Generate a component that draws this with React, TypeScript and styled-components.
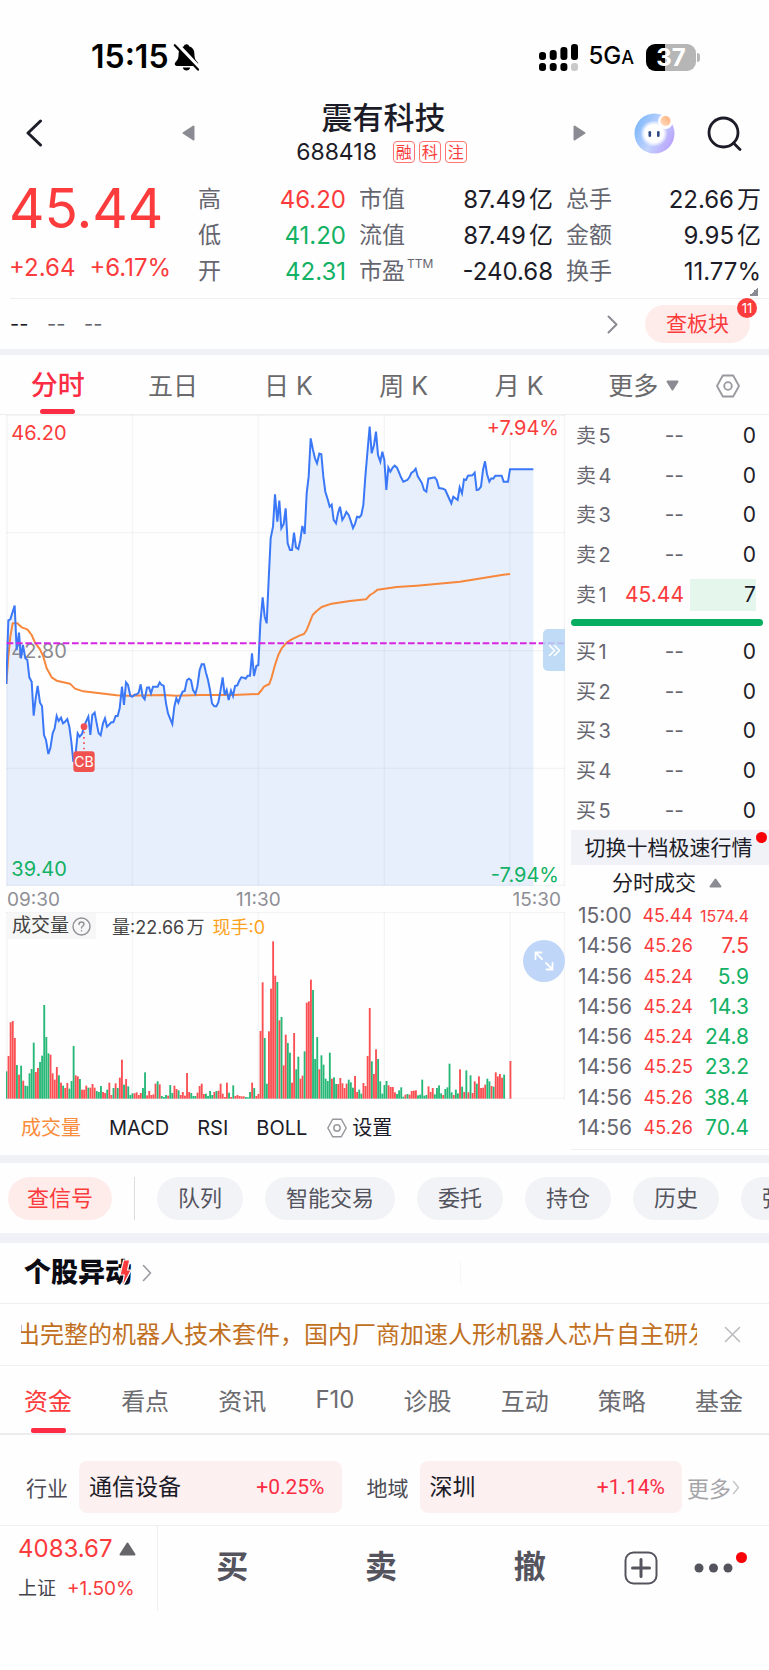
import React from "react";
import styled, { createGlobalStyle } from "styled-components";

const RED = "#fb3b3c";
const GREEN = "#12b164";
const INK = "#1c1c28";
const GRAY = "#666670";
const BAND = "#f0f1f6";
const LINE = "#efeff1";

const toneColor = { red: RED, green: GREEN, ink: INK, gray: GRAY } as const;
type Tone = keyof typeof toneColor;

const GlobalStyle = createGlobalStyle`
  *, *::before, *::after { box-sizing: border-box; }
  body {
    margin: 0;
    background: #fefefe;
    color: ${INK};
    font-family: Inter, "Noto Sans CJK SC", sans-serif;
    text-autospace: normal;
    overflow-x: hidden;
  }
  button { font: inherit; color: inherit; border: 0; background: none; padding: 0; cursor: pointer; }
  a { color: inherit; text-decoration: none; }
  h1, h2, p, dl, dd, dt { margin: 0; font-weight: 400; }
  svg { display: block; flex: none; }
`;

const Page = styled.div`
  width: 100%;
  min-height: 100vh;
  overflow: hidden;
`;

/* ---------- status bar ---------- */

const StatusBar = styled.div`
  display: flex;
  align-items: center;
  justify-content: space-between;
  height: 92px;
  padding: 22px 73px 0 91px;
  color: #000;
`;
const StatusGroup = styled.div<{ $gap: number }>`
  display: flex;
  align-items: center;
  gap: ${(p) => p.$gap}px;
`;
const Clock = styled.span`
  font-size: 32px;
  font-weight: 600;
  line-height: 36px;
`;
const Network = styled.span`
  font-size: 24px;
  font-weight: 500;
  line-height: 30px;
  padding-right: 2px;
  small { font-size: 18px; }
`;
const Battery = styled.span`
  position: relative;
  display: block;
  width: 50px;
  height: 27px;
  border-radius: 9px;
  background: linear-gradient(90deg, #000 37%, #b6b6b6 37%);
  color: #fff;
  font-size: 24px;
  font-weight: 700;
  line-height: 27px;
  text-align: center;
  &::after {
    content: "";
    position: absolute;
    right: -4px;
    top: 9px;
    width: 3px;
    height: 9px;
    border-radius: 0 3px 3px 0;
    background: #b6b6b6;
  }
`;

/* ---------- title bar ---------- */

const TitleBar = styled.header`
  display: grid;
  grid-template-columns: 1fr auto 1fr;
  align-items: center;
  height: 82px;
  padding: 0 27px 0 25px;
`;
const TitleSide = styled.div<{ $right?: boolean }>`
  display: flex;
  align-items: center;
  justify-content: space-between;
  padding: ${(p) => (p.$right ? "0 0 0 102px" : "0 102px 0 0")};
`;
const TitleActions = styled.div`
  display: flex;
  align-items: center;
  gap: 32px;
`;
const TitleBlock = styled.div`
  width: 174px;
  display: flex;
  flex-direction: column;
  align-items: center;
`;
const StockName = styled.h1`
  font-size: 31px;
  font-weight: 500;
  line-height: 38px;
`;
const CodeRow = styled.div`
  display: flex;
  align-items: center;
  gap: 4px;
  height: 30px;
  padding-right: 4px;
`;
const Code = styled.span`
  font-size: 23px;
  line-height: 30px;
  margin-right: 12px;
`;
const Tag = styled.span`
  width: 22px;
  height: 22px;
  border: 1px solid #ff7474;
  border-radius: 4px;
  color: ${RED};
  font-size: 16px;
  line-height: 20px;
  text-align: center;
`;

/* ---------- quote summary ---------- */

const Quote = styled.section`
  position: relative;
  display: grid;
  grid-template-columns: 189px minmax(0, 1fr);
  padding: 7px 8px 9px 9px;
`;
const PriceBlock = styled.div`
  display: flex;
  flex-direction: column;
  justify-content: space-between;
  color: ${RED};
`;
const Price = styled.p`
  font-size: 55px;
  line-height: 54px;
`;
const Changes = styled.p`
  display: flex;
  gap: 14px;
  font-size: 24px;
  line-height: 42px;
`;
const Metrics = styled.div`
  display: grid;
  grid-template-columns: 148fr 194fr 195fr;
  column-gap: 13px;
`;
const MetricGroup = styled.dl`
  display: flex;
  flex-direction: column;
`;
const Metric = styled.div<{ $tone: Tone }>`
  display: flex;
  justify-content: space-between;
  height: 36px;
  font-size: 24px;
  line-height: 37px;
  white-space: nowrap;
  dt { display: flex; color: ${GRAY}; font-size: 23px; }
  dd { color: ${(p) => toneColor[p.$tone]}; }
  sup { font-size: 12px; line-height: 22px; margin-left: 2px; }
`;
const Corner = styled.span`
  position: absolute;
  right: 11px;
  bottom: 2px;
  width: 9px;
  height: 9px;
  background: linear-gradient(135deg, transparent 50%, #8b8b93 50%);
`;
const SectorRow = styled.div`
  display: flex;
  align-items: center;
  height: 51px;
  margin-left: 10px;
  padding-right: 19px;
  border-top: 1px solid ${LINE};
  color: ${GRAY};
  font-size: 20px;
`;
const Dashes = styled.span`
  width: 37px;
  line-height: 24px;
  &:first-child { color: ${INK}; }
`;
const SectorLink = styled.button`
  margin-left: auto;
  margin-right: 27px;
`;
const SectorButton = styled.button`
  position: relative;
  width: 105px;
  height: 38px;
  border-radius: 19px;
  background: #feeceb;
  color: ${RED};
  font-size: 21px;
  line-height: 38px;
`;
const CountBadge = styled.span`
  position: absolute;
  right: -7px;
  top: -7px;
  width: 20px;
  height: 20px;
  border-radius: 50%;
  background: ${RED};
  color: #fff;
  font-size: 13px;
  line-height: 20px;
  text-align: center;
`;
const Band = styled.div<{ $size: number }>`
  height: ${(p) => p.$size}px;
  background: ${BAND};
`;

/* ---------- period tabs ---------- */

const PeriodTabs = styled.nav`
  display: grid;
  grid-template-columns: repeat(5, 15%) 1fr 82px;
  height: 60px;
  border-bottom: 1px solid ${LINE};
`;
const PeriodTab = styled.button<{ $active?: boolean; $menu?: boolean }>`
  position: relative;
  display: flex;
  align-items: center;
  justify-content: center;
  gap: 8px;
  padding: 2px 0 0 ${(p) => (p.$menu ? 24 : 0)}px;
  color: ${(p) => (p.$active ? "#fb2c43" : "#6a6a6c")};
  font-size: ${(p) => (p.$active ? 27 : 25)}px;
  font-weight: ${(p) => (p.$active ? 500 : 400)};
  line-height: 36px;
  &::after {
    content: "";
    display: ${(p) => (p.$active ? "block" : "none")};
    position: absolute;
    bottom: 0;
    width: 35px;
    height: 5px;
    border-radius: 3px;
    background: #fb2c43;
  }
`;

/* ---------- market area ---------- */

const Market = styled.section`
  display: grid;
  grid-template-columns: minmax(0, 1fr) 204px;
`;
const ChartColumn = styled.div`
  display: flex;
  flex-direction: column;
`;
const ChartFrame = styled.div`
  position: relative;
  padding-left: 6px;
  svg.plot { width: 100%; height: auto; }
`;
const OpenSide = styled.button`
  position: absolute;
  right: 0;
  top: 214px;
  display: flex;
  align-items: center;
  justify-content: center;
  width: 22px;
  height: 42px;
  border-radius: 5px 0 0 5px;
  background: #b5d6f4dd;
`;
const TimeAxis = styled.div`
  display: grid;
  grid-template-columns: 228fr auto 279fr;
  padding: 0 4px 0 7px;
  color: #8f8f96;
  font-size: 19px;
  line-height: 27px;
  height: 26px;
  span:last-child { text-align: right; }
`;
const VolumeLegend = styled.div`
  position: absolute;
  left: 7px;
  top: 1px;
  display: flex;
  align-items: flex-start;
  color: #444;
  font-size: 18px;
  line-height: 30px;
`;
const VolumeName = styled.button`
  display: flex;
  align-items: center;
  gap: 3px;
  height: 26px;
  padding: 0 5px;
  margin-right: 16px;
  background: #f7f7f7;
  font-size: 19px;
  line-height: 26px;
`;
const VolumeNow = styled.span`
  margin-left: 8px;
  color: #fca21c;
`;
const Expand = styled.button`
  position: absolute;
  right: 0;
  top: 28px;
  display: flex;
  align-items: center;
  justify-content: center;
  width: 42px;
  height: 42px;
  border-radius: 50%;
  background: #bfd6f8;
`;
const Indicators = styled.nav`
  display: flex;
  align-items: center;
  gap: 28px;
  height: 56px;
  padding: 2px 0 0 21px;
  font-size: 20px;
`;
const Indicator = styled.button<{ $active?: boolean }>`
  display: flex;
  align-items: center;
  gap: 5px;
  line-height: 28px;
  white-space: nowrap;
  color: ${(p) => (p.$active ? "#fb8c3c" : INK)};
  &:last-child { margin-left: -8px; }
`;

/* ---------- order book ---------- */

const Side = styled.aside`
  display: flex;
  flex-direction: column;
  padding: 1px 0 5px 6px;
`;
const Book = styled.table`
  width: 184px;
  height: 198px;
  margin-left: 5px;
  border-collapse: collapse;
  table-layout: fixed;
  font-size: 21px;
  line-height: 32px;
  td, th { padding: 1px 0 0; font-weight: 400; white-space: nowrap; }
`;
const Level = styled.th`
  width: 42px;
  text-align: left;
  color: ${GRAY};
  font-size: 20px;
`;
const LevelPrice = styled.td<{ $tone: Tone }>`
  width: 66px;
  text-align: right;
  color: ${(p) => toneColor[p.$tone]};
`;
const LevelSize = styled.td`
  text-align: right;
`;
const SizeBar = styled.span<{ $filled: boolean }>`
  display: block;
  margin-left: 6px;
  margin-right: 4px;
  background: ${(p) => (p.$filled ? "#e5f6ed" : "transparent")};
`;
const Ratio = styled.div`
  height: 7px;
  margin: 5px 6px 6px 0;
  border-radius: 4px;
  background: #07ae60;
`;
const DepthSwitch = styled.button`
  position: relative;
  height: 35px;
  padding-right: 3px;
  background: #f1f2f7;
  font-size: 21px;
  line-height: 35px;
`;
const Dot = styled.span<{ $right: number; $top: number }>`
  position: absolute;
  right: ${(p) => p.$right}px;
  top: ${(p) => p.$top}px;
  width: 11px;
  height: 11px;
  border-radius: 50%;
  background: #fb0007;
`;
const TradesTitle = styled.button`
  display: flex;
  align-items: center;
  justify-content: center;
  gap: 13px;
  height: 36px;
  padding: 0 44px 0 38px;
  font-size: 21px;
  line-height: 36px;
`;
const Trades = styled.table`
  width: 171px;
  height: 242px;
  margin: 0 0 6px 7px;
  border-collapse: collapse;
  table-layout: fixed;
  td { padding: 0; white-space: nowrap; text-align: right; line-height: 28px; }
`;
const TradeTime = styled.td`
  width: 56px;
  color: ${GRAY};
  font-size: 21px;
  && { text-align: left; }
`;
const TradePrice = styled.td`
  width: 59px;
  color: ${RED};
  font-size: 18px;
`;
const TradeSize = styled.td<{ $tone: Tone; $small: boolean }>`
  color: ${(p) => toneColor[p.$tone]};
  font-size: ${(p) => (p.$small ? 16 : 21)}px;
`;
const SideRule = styled.div`
  height: 1px;
  background: ${LINE};
`;

/* ---------- shortcuts ---------- */

const Shortcuts = styled.nav`
  display: flex;
  gap: 22px;
  height: 70px;
  padding: 14px 0 13px 8px;
  overflow: hidden;
`;
const Pill = styled.button<{ $hot?: boolean }>`
  flex: none;
  height: 43px;
  padding: 0 ${(p) => (p.$hot ? 19 : 21)}px;
  border-radius: 22px;
  background: ${(p) => (p.$hot ? "#feeceb" : "#f2f3f7")};
  color: ${(p) => (p.$hot ? RED : "#54545e")};
  font-size: 22px;
  line-height: 43px;
`;
const PillRule = styled.span`
  flex: none;
  width: 1px;
  background: #dddde1;
`;

/* ---------- movement and news ---------- */

const Movement = styled.section`
  display: flex;
  align-items: center;
  height: 61px;
  padding-left: 24px;
  border-bottom: 1px solid ${LINE};
`;
const MovementTitle = styled.h2`
  position: relative;
  margin-right: 10px;
  color: #0b0b14;
  font-size: 27px;
  font-weight: 900;
  line-height: 30px;
  svg { position: absolute; right: 0; top: 1px; }
`;
const FaintRule = styled.span`
  width: 1px;
  height: 22px;
  margin-left: 308px;
  background: #f6f6f8;
`;
const News = styled.section`
  display: flex;
  align-items: center;
  justify-content: space-between;
  height: 62px;
  padding: 0 28px 0 21px;
  border-bottom: 1px solid ${LINE};
`;
const NewsClip = styled.div`
  flex: 1;
  min-width: 0;
  margin-right: 27px;
  overflow: hidden;
`;
const NewsText = styled.p`
  margin-left: -5px;
  color: #c1701f;
  font-size: 24px;
  line-height: 34px;
  white-space: nowrap;
`;
const InfoTabs = styled.nav`
  display: flex;
  justify-content: space-between;
  height: 69px;
  padding: 0 26px 0 24px;
  border-bottom: 2px solid #ededf0;
`;
const InfoTab = styled.button<{ $active?: boolean }>`
  position: relative;
  display: flex;
  justify-content: center;
  align-items: center;
  color: ${(p) => (p.$active ? RED : "#6b6b70")};
  font-size: 24px;
  &::after {
    content: "";
    display: ${(p) => (p.$active ? "block" : "none")};
    position: absolute;
    bottom: 0;
    width: 35px;
    height: 5px;
    border-radius: 2px;
    background: #fb2c43;
  }
`;
const Peers = styled.section`
  display: flex;
  align-items: center;
  height: 91px;
  padding: 26px 29px 12px 26px;
  border-bottom: 1px solid ${LINE};
`;
const PeerLabel = styled.span`
  flex: none;
  width: 53px;
  color: #4c4c56;
  font-size: 21px;
`;
const PeerCard = styled.a`
  flex: 1;
  display: flex;
  align-items: center;
  justify-content: space-between;
  height: 52px;
  padding: 0 17px 0 10px;
  border-radius: 8px;
  background: #fdf0f1;
  font-size: 23px;
  line-height: 30px;
  & + span { margin-left: 25px; }
  b {
    color: #fb2c43;
    font-family: Roboto, sans-serif;
    font-weight: 400;
    font-size: 21px;
  }
`;
const PeerMore = styled.a`
  display: flex;
  align-items: center;
  gap: 1px;
  margin-left: 5px;
  color: #a5a5a9;
  font-size: 22px;
`;

/* ---------- bottom bar ---------- */

const BottomBar = styled.footer`
  display: grid;
  grid-template-columns: 158px 149fr 149fr 149fr 73fr 73fr;
  height: 85px;
  padding-right: 19px;
`;
const IndexCell = styled.a`
  display: flex;
  flex-direction: column;
  gap: 9px;
  padding: 8px 0 0 18px;
  border-right: 1px solid ${LINE};
`;
const IndexValue = styled.span`
  display: flex;
  align-items: center;
  gap: 6px;
  color: ${RED};
  font-size: 24px;
  line-height: 30px;
`;
const IndexChange = styled.span`
  display: flex;
  gap: 11px;
  color: #44444e;
  font-size: 19px;
  line-height: 31px;
  b { color: ${RED}; font-weight: 400; }
`;
const BottomAction = styled.button`
  position: relative;
  display: flex;
  align-items: center;
  justify-content: center;
  padding-bottom: 2px;
  color: #54545f;
  font-size: 32px;
  font-weight: 700;
`;
const ActionLabel = styled.span`
  line-height: 40px;
  padding-bottom: 2px;
`;

/* ---------- data ---------- */

const metricGroups: { label: string; sup?: string; value: string; tone: Tone }[][] = [
  [
    { label: "高", value: "46.20", tone: "red" },
    { label: "低", value: "41.20", tone: "green" },
    { label: "开", value: "42.31", tone: "green" },
  ],
  [
    { label: "市值", value: "87.49亿", tone: "ink" },
    { label: "流值", value: "87.49亿", tone: "ink" },
    { label: "市盈", sup: "TTM", value: "-240.68", tone: "ink" },
  ],
  [
    { label: "总手", value: "22.66万", tone: "ink" },
    { label: "金额", value: "9.95亿", tone: "ink" },
    { label: "换手", value: "11.77%", tone: "ink" },
  ],
];

const sells = [
  ["卖5", "--", "0"],
  ["卖4", "--", "0"],
  ["卖3", "--", "0"],
  ["卖2", "--", "0"],
  ["卖1", "45.44", "7"],
];
const buys = [
  ["买1", "--", "0"],
  ["买2", "--", "0"],
  ["买3", "--", "0"],
  ["买4", "--", "0"],
  ["买5", "--", "0"],
];

const trades: [string, string, string, Tone][] = [
  ["15:00", "45.44", "1574.4", "red"],
  ["14:56", "45.26", "7.5", "red"],
  ["14:56", "45.24", "5.9", "green"],
  ["14:56", "45.24", "14.3", "green"],
  ["14:56", "45.24", "24.8", "green"],
  ["14:56", "45.25", "23.2", "green"],
  ["14:56", "45.26", "38.4", "green"],
  ["14:56", "45.26", "70.4", "green"],
];

/* Chart units are a third of a pixel at the design width. */
const pricePoints =
  "19,807 25,616 31,613 44,572 50,705 57,653 63,730 69,690 76,730 82,735 88,787 95,800 101,902 107,850 113,813 120,863 126,873 132,960 138,975 145,1017 151,1000 158,955 164,940 170,903 176,918 183,908 189,925 195,920 202,912 208,935 214,980 220,1040 227,1015 233,955 239,965 246,957 252,935 258,920 265,905 271,960 277,900 284,893 290,925 296,955 302,961 309,925 315,910 321,935 328,928 334,922 340,922 347,903 353,903 359,880 366,815 372,870 378,802 384,810 391,843 397,845 404,839 410,838 416,833 422,808 428,845 434,853 441,818 447,817 453,835 459,815 466,815 473,815 479,802 485,810 491,812 498,865 504,895 510,910 517,927 523,875 529,850 535,863 542,843 548,830 554,828 561,795 567,791 573,796 579,825 586,837 592,815 599,765 605,748 612,748 618,773 624,795 630,825 636,865 643,874 649,874 655,862 661,830 668,787 674,840 680,825 686,855 693,827 699,843 705,813 712,811 718,797 724,787 731,788 737,791 743,782 750,782 756,715 762,783 769,753 775,750 781,625 788,547 794,605 800,625 806,495 812,370 819,335 825,238 832,320 838,257 844,340 851,327 857,280 863,385 870,405 876,405 882,353 888,397 895,402 901,375 907,333 914,357 920,235 926,185 932,70 939,105 945,130 951,145 958,116 964,118 970,185 976,230 983,253 989,275 995,269 1001,315 1008,325 1014,295 1020,275 1027,315 1033,305 1039,291 1046,300 1052,317 1059,339 1065,327 1071,305 1078,307 1084,300 1090,270 1096,185 1102,115 1109,35 1115,115 1122,90 1128,50 1134,120 1141,140 1147,110 1153,135 1159,225 1165,158 1171,170 1178,158 1184,152 1191,158 1197,172 1203,187 1210,200 1222,195 1228,187 1234,174 1241,169 1247,161 1253,183 1266,205 1272,225 1279,230 1285,191 1304,187 1310,195 1317,219 1329,221 1336,225 1348,252 1354,265 1360,245 1373,255 1379,217 1386,235 1392,193 1398,195 1404,182 1417,181 1424,173 1430,225 1436,224 1443,215 1449,165 1455,139 1461,177 1468,200 1474,190 1480,191 1486,182 1505,182 1511,200 1524,200 1530,163 1600,163";

const averagePoints =
  "19,807 25,725 31,665 38,625 52,625 65,637 82,643 95,660 105,683 120,703 130,725 140,760 155,787 170,797 210,806 225,821 250,829 300,835 350,841 380,842 490,840 530,842 600,840 700,840 775,837 785,825 792,815 808,807 815,787 825,750 835,720 845,700 860,683 875,673 900,661 912,657 920,645 930,620 938,600 950,588 965,576 995,566 1050,558 1098,553 1110,540 1120,534 1133,524 1190,516 1250,512 1340,504 1380,500 1510,479 1530,477";

const volumes = (
  "g82 r128 r229 r233 r182 g101 r72 g99 r54 g39 g38 g76 g89 g168 r80 r92 g110 g129 g281 g185 g136 r132 r76 r57 r95 g70 r48 g39 r32 r47 g30 g53 g158 r70 r67 g59 r27 r27 r39 g33 r33 r44 r33 g23 g20 g38 r20 r17 g27 r48 r11 g32 r46 g32 r63 r117 g42 r59 g37 g11 " +
  "g16 r16 r19 r11 r17 g32 g79 r10 r23 r11 r13 r45 g52 r43 g8 g5 g11 r9 g41 g17 r39 r29 g25 r11 r20 r9 r77 r20 g17 g8 g8 r18 r38 r45 r14 g15 g8 g23 g11 r20 g23 r24 r45 r15 r5 r48 g18 r5 g40 r8 r11 r8 r7 r7 g5 g4 g20 r48 g32 r8 " +
  "r14 r203 r349 g182 g45 r202 r330 r472 r369 g350 r235 g245 r100 r192 g167 g138 r48 r197 g88 g126 r60 r69 g142 r288 r292 r357 g326 g119 g185 r88 g130 g102 g60 g53 g138 r60 g64 g44 r44 r62 r46 r32 r45 g57 g49 g33 r68 r20 g27 g15 r47 r38 r128 r272 g112 r74 r148 g119 g52 g15 " +
  "g41 g53 r40 r35 r35 r19 g14 g25 g34 g6 r12 g14 r12 r23 r24 r25 g10 g12 g57 g9 g11 r37 r20 r32 g13 g32 g40 g16 r11 g29 g34 g105 g19 r11 g27 g16 r88 g36 r20 g85 r19 g70 r17 r52 g45 r67 r32 r33 r42 g60 g52 r38 g36 r79 r67 r74 r63 g72 g0 g0 r113"
).split(" ");

const shortcuts = ["队列", "智能交易", "委托", "持仓", "历史", "弹幕"];
const infoTabs = ["资金", "看点", "资讯", "F10", "诊股", "互动", "策略", "基金"];
const gridX = [21, 397, 775, 1153, 1530];

/* ---------- icons ---------- */

const BellOffIcon = () => (
  <svg width="27" height="29" viewBox="0 0 27 29">
    <path d="M13.5 1.2c-1.5 0-2.4.9-2.6 2.1C7.500 4.300 5.600 7 5.600 10.800c0 5.200-1.500 6.700-3 8.300-1.500 1.700-.8 3.900 1.200 3.900h19.400c2 0 2.700-2.200 1.200-3.900-1.500-1.600-3-3.100-3-8.300 0-3.800-1.900-6.500-5.300-7.500-.2-1.200-1.100-2.100-2.600-2.100z" />
    <path d="M9.800 24.600h7.400c-.4 1.900-1.800 3-3.700 3s-3.300-1.100-3.700-3z" />
    <path d="M3.600 1 26.500 25.500" stroke="#fefefe" strokeWidth="4.400" />
    <path d="M1.800 2.200 25 26.600" stroke="#000" strokeWidth="2.200" strokeLinecap="round" />
  </svg>
);

const SignalIcon = () => (
  <svg width="39" height="27" viewBox="0 0 39 27">
    <rect x="0" y="8" width="7" height="8" rx="3" />
    <rect x="10.700" y="6" width="7" height="10" rx="3" />
    <rect x="21.400" y="3" width="7" height="13" rx="3" />
    <rect x="32" y="0" width="7" height="16" rx="3" />
    <rect x="0" y="19" width="7" height="8" rx="3" />
    <rect x="10.700" y="19" width="7" height="8" rx="3" />
    <rect x="21.400" y="19" width="7" height="8" rx="3" />
    <rect x="32" y="19" width="7" height="8" rx="3" fill="#c9c9c9" />
  </svg>
);

const Arrow = ({ w, h, d, color, width = 2 }: { w: number; h: number; d: string; color: string; width?: number }) => (
  <svg width={w} height={h} viewBox={`0 0 ${w} ${h}`} fill="none" stroke={color} strokeWidth={width} strokeLinecap="round" strokeLinejoin="round">
    <path d={d} />
  </svg>
);

const Triangle = ({ w, h, points, color }: { w: number; h: number; points: string; color: string }) => (
  <svg width={w} height={h} viewBox={`0 0 ${w} ${h}`} fill={color} stroke={color} strokeWidth="2" strokeLinejoin="round">
    <polygon points={points} />
  </svg>
);

const AssistantIcon = () => (
  <svg width="41" height="41" viewBox="0 0 41 41">
    <defs>
      <linearGradient id="halo" x1="0" y1="0.300" x2="1" y2="0.800">
        <stop offset="0" stopColor="#7db8fb" />
        <stop offset="0.500" stopColor="#c3d3fd" />
        <stop offset="1" stopColor="#b79cfb" />
      </linearGradient>
      <radialGradient id="face" cx="0.500" cy="0.500" r="0.500">
        <stop offset="0.700" stopColor="#fff" />
        <stop offset="1" stopColor="#fff" stopOpacity="0.200" />
      </radialGradient>
      <linearGradient id="orb" x1="0" y1="1" x2="1" y2="0">
        <stop offset="0" stopColor="#ffe0c4" />
        <stop offset="1" stopColor="#fdae78" />
      </linearGradient>
    </defs>
    <circle cx="20.500" cy="20.500" r="20" fill="url(#halo)" />
    <rect x="7" y="8" width="26" height="25" rx="12" fill="url(#face)" />
    <circle cx="31.500" cy="8.500" r="7.500" fill="#fefefe" />
    <circle cx="31.500" cy="8" r="5" fill="url(#orb)" />
    <rect x="14.500" y="18" width="2.600" height="6" rx="1.300" fill="#2e4a86" />
    <rect x="23" y="18" width="2.600" height="6" rx="1.300" fill="#2e4a86" />
  </svg>
);

const SearchIcon = () => (
  <svg width="35" height="35" viewBox="0 0 35 35" fill="none" stroke={INK} strokeWidth="2.800" strokeLinecap="round">
    <circle cx="16.500" cy="16.500" r="14.500" />
    <path d="m26.500 27 6.500 6.500" />
  </svg>
);

const HexIcon = ({ size }: { size: number }) => (
  <svg width={size} height={size} viewBox="0 0 24 24" fill="none" stroke="#98989f" strokeWidth="1.800" strokeLinejoin="round">
    <path d="M6.800 1.500h10.400L23 12l-5.800 10.500H6.800L1 12z" />
    <circle cx="12" cy="12" r="3.800" />
  </svg>
);

const HelpIcon = () => (
  <svg width="19" height="19" viewBox="0 0 19 19" fill="none" stroke="#909096" strokeWidth="1.400" strokeLinecap="round">
    <circle cx="9.500" cy="9.500" r="8.500" />
    <path d="M7 7.500c0-1.500 1.100-2.500 2.500-2.500S12 6 12 7.300c0 1.700-2.500 1.700-2.500 3.700M9.500 13.600v.3" />
  </svg>
);

const ExpandIcon = () => (
  <svg width="20" height="20" viewBox="0 0 20 20" fill="none" stroke="#fff" strokeWidth="1.800" strokeLinecap="round">
    <path d="M1.500 8V1.500h6M1.800 1.800 8 8M18.500 12v6.500h-6M18.200 18.200 12 12" />
  </svg>
);

const PlusBoxIcon = () => (
  <svg width="34" height="34" viewBox="0 0 34 34" fill="none" stroke="#54545f">
    <rect x="1.500" y="1.500" width="31" height="31" rx="8" strokeWidth="2" />
    <path d="M8.500 17h17M17 8.500v17" strokeWidth="3" strokeLinecap="round" />
  </svg>
);

const MoreDotsIcon = () => (
  <svg width="39" height="10" viewBox="0 0 39 10" fill="#54545f">
    <circle cx="5" cy="5" r="4.500" />
    <circle cx="19.500" cy="5" r="4.500" />
    <circle cx="34" cy="5" r="4.500" />
  </svg>
);

const BoltIcon = () => (
  <svg width="14" height="30" viewBox="0 0 14 30" fill={RED} stroke="#fefefe" strokeWidth="1.200">
    <path d="M5.500 1h6.300L9.600 11h3.600L4 29l2.200-13H2z" />
  </svg>
);

/* ---------- charts ---------- */

const PriceChart = () => (
  <svg className="plot" viewBox="18 0 1677 1413" fontFamily="Inter" fontSize="60">
    <polygon points={`${pricePoints} 1600,1412 19,1412`} fill="#e7effc" />
    <g stroke="#9aa0b4" strokeOpacity="0.140" strokeWidth="3">
      {gridX.map((x) => (
        <path key={x} d={`M${x} 0V1412`} />
      ))}
      <path d="M1693 0V1412M18 1H1695M18 353H1695M18 707H1695M18 1060H1695M18 1411H1695" />
    </g>
    <text x="34" y="729" fill="#8b8b8f">42.80</text>
    <polyline points={averagePoints} fill="none" stroke="#f6873b" strokeWidth="6" strokeLinejoin="round" />
    <polyline points={pricePoints} fill="none" stroke="#3a78f7" strokeWidth="6" strokeLinejoin="miter" />
    <path d="M20 685H1695" stroke="#d526e2" strokeWidth="6" strokeDasharray="20 8" />
    <text x="34" y="74" fill={RED}>46.20</text>
    <text x="1677" y="59" fill={RED} textAnchor="end">+7.94%</text>
    <text x="34" y="1384" fill={GREEN}>39.40</text>
    <text x="1677" y="1400" fill={GREEN} textAnchor="end">-7.94%</text>
    <circle cx="252" cy="935" r="10" fill="#ef4f55" />
    <path d="M252 950V1004" stroke="#ef4f55" strokeWidth="5" strokeDasharray="5 11" />
    <rect x="220" y="1009" width="64" height="62" rx="9" fill="#ef524f" />
    <text x="252" y="1055" fill="#fff" fontSize="42" textAnchor="middle">CB</text>
  </svg>
);

const VolumeChart = () => (
  <svg className="plot" viewBox="18 0 1677 561">
    <g stroke="#9aa0b4" strokeOpacity="0.140" strokeWidth="3">
      {gridX.map((x) => (
        <path key={x} d={`M${x} 0V560`} />
      ))}
      <path d="M1693 0V560M18 1H1695M18 559H1695" />
    </g>
    {volumes.map((v, i) => {
      const h = Number(v.slice(1));
      return (
        <rect key={i} x={16.5 + i * 6.3} y={560 - h} width="5.600" height={h} fill={v[0] === "r" ? "#fa5053" : "#27b878"} />
      );
    })}
  </svg>
);

const OrderTable = ({ rows, label }: { rows: string[][]; label: string }) => (
  <Book aria-label={label}>
    <tbody>
      {rows.map(([name, price, size]) => (
        <tr key={name}>
          <Level scope="row">{name}</Level>
          <LevelPrice $tone={price === "--" ? "gray" : "red"}>{price}</LevelPrice>
          <LevelSize>
            <SizeBar $filled={size !== "0"}>{size}</SizeBar>
          </LevelSize>
        </tr>
      ))}
    </tbody>
  </Book>
);

export default function App() {
  return (
    <Page>
      <GlobalStyle />
      <StatusBar>
        <StatusGroup $gap={4}>
          <Clock>15:15</Clock>
          <BellOffIcon />
        </StatusGroup>
        <StatusGroup $gap={10}>
          <SignalIcon />
          <Network>
            5G<small>A</small>
          </Network>
          <Battery>37</Battery>
        </StatusGroup>
      </StatusBar>

      <TitleBar>
        <TitleSide>
          <button aria-label="返回">
            <Arrow w={18} h={28} d="M15.500 2 3 14l12.500 12" color={INK} width={3} />
          </button>
          <button aria-label="上一只">
            <Triangle w={13} h={16} points="11.500,1.500 11.500,14.500 1.500,8" color="#8b8b93" />
          </button>
        </TitleSide>
        <TitleBlock>
          <StockName>震有科技</StockName>
          <CodeRow>
            <Code>688418</Code>
            <Tag>融</Tag>
            <Tag>科</Tag>
            <Tag>注</Tag>
          </CodeRow>
        </TitleBlock>
        <TitleSide $right>
          <button aria-label="下一只">
            <Triangle w={13} h={16} points="1.500,1.500 1.500,14.500 11.500,8" color="#8b8b93" />
          </button>
          <TitleActions>
            <button aria-label="智能助手">
              <AssistantIcon />
            </button>
            <button aria-label="搜索">
              <SearchIcon />
            </button>
          </TitleActions>
        </TitleSide>
      </TitleBar>

      <Quote>
        <PriceBlock>
          <Price>45.44</Price>
          <Changes>
            <span>+2.64</span>
            <span>+6.17%</span>
          </Changes>
        </PriceBlock>
        <Metrics>
          {metricGroups.map((group, i) => (
            <MetricGroup key={i}>
              {group.map((m) => (
                <Metric key={m.label} $tone={m.tone}>
                  <dt>
                    {m.label}
                    {m.sup && <sup>{m.sup}</sup>}
                  </dt>
                  <dd>{m.value}</dd>
                </Metric>
              ))}
            </MetricGroup>
          ))}
        </Metrics>
        <Corner />
      </Quote>

      <SectorRow>
        <Dashes>--</Dashes>
        <Dashes>--</Dashes>
        <Dashes>--</Dashes>
        <SectorLink aria-label="所属板块">
          <Arrow w={11} h={19} d="m1.500 1.500 8 8-8 8" color="#8b8b93" width={2} />
        </SectorLink>
        <SectorButton>
          查板块<CountBadge>11</CountBadge>
        </SectorButton>
      </SectorRow>
      <Band $size={6} />

      <PeriodTabs>
        <PeriodTab $active>分时</PeriodTab>
        <PeriodTab>五日</PeriodTab>
        <PeriodTab>日 K</PeriodTab>
        <PeriodTab>周 K</PeriodTab>
        <PeriodTab>月 K</PeriodTab>
        <PeriodTab $menu>
          更多
          <Triangle w={13} h={11} points="1.500,1.500 11.500,1.500 6.500,9.500" color="#8b8b93" />
        </PeriodTab>
        <PeriodTab aria-label="图表设置">
          <HexIcon size={24} />
        </PeriodTab>
      </PeriodTabs>

      <Market>
        <ChartColumn>
          <ChartFrame>
            <PriceChart />
            <OpenSide aria-label="展开">
              <Arrow w={13} h={13} d="m1.500 1.500 5 5-5 5M6.500 1.500l5 5-5 5" color="#fff" width={1.6} />
            </OpenSide>
          </ChartFrame>
          <TimeAxis>
            <span>09:30</span>
            <span>11:30</span>
            <span>15:30</span>
          </TimeAxis>
          <ChartFrame>
            <VolumeChart />
            <VolumeLegend>
              <VolumeName>
                成交量
                <HelpIcon />
              </VolumeName>
              <span>量:22.66万</span>
              <VolumeNow>现手:0</VolumeNow>
            </VolumeLegend>
            <Expand aria-label="全屏">
              <ExpandIcon />
            </Expand>
          </ChartFrame>
          <Indicators>
            <Indicator $active>成交量</Indicator>
            <Indicator>MACD</Indicator>
            <Indicator>RSI</Indicator>
            <Indicator>BOLL</Indicator>
            <Indicator>
              <HexIcon size={20} />
              设置
            </Indicator>
          </Indicators>
        </ChartColumn>

        <Side>
          <OrderTable rows={sells} label="卖盘" />
          <Ratio />
          <OrderTable rows={buys} label="买盘" />
          <DepthSwitch>
            切换十档极速行情
            <Dot $right={2} $top={2} />
          </DepthSwitch>
          <TradesTitle>
            分时成交
            <Triangle w={13} h={10} points="6.500,1.500 11.500,8.500 1.500,8.500" color="#8b8b93" />
          </TradesTitle>
          <Trades aria-label="分时成交">
            <tbody>
              {trades.map(([time, price, size, tone], i) => (
                <tr key={i}>
                  <TradeTime>{time}</TradeTime>
                  <TradePrice>{price}</TradePrice>
                  <TradeSize $tone={tone} $small={size.length > 5}>
                    {size}
                  </TradeSize>
                </tr>
              ))}
            </tbody>
          </Trades>
          <SideRule />
        </Side>
      </Market>
      <Band $size={8} />

      <Shortcuts>
        <Pill $hot>查信号</Pill>
        <PillRule />
        {shortcuts.map((s) => (
          <Pill key={s}>{s}</Pill>
        ))}
      </Shortcuts>
      <Band $size={10} />

      <Movement>
        <MovementTitle>
          个股异动
          <BoltIcon />
        </MovementTitle>
        <Arrow w={10} h={18} d="m1.500 1.500 7 7.500-7 7.500" color="#9a9aa0" width={1.6} />
        <FaintRule />
      </Movement>

      <News>
        <NewsClip>
          <NewsText>出完整的机器人技术套件，国内厂商加速人形机器人芯片自主研发</NewsText>
        </NewsClip>
        <button aria-label="关闭">
          <Arrow w={17} h={17} d="m1.500 1.500 14 14M15.500 1.500l-14 14" color="#bcbcc0" width={1.6} />
        </button>
      </News>

      <InfoTabs>
        {infoTabs.map((t, i) => (
          <InfoTab key={t} $active={i === 0}>
            {t}
          </InfoTab>
        ))}
      </InfoTabs>

      <Peers>
        <PeerLabel>行业</PeerLabel>
        <PeerCard href="#industry">
          通信设备 <b>+0.25%</b>
        </PeerCard>
        <PeerLabel>地域</PeerLabel>
        <PeerCard href="#region">
          深圳 <b>+1.14%</b>
        </PeerCard>
        <PeerMore href="#more">
          更多
          <Arrow w={8} h={15} d="m1.500 1.500 5 6-5 6" color="#c4c4c8" width={1.4} />
        </PeerMore>
      </Peers>

      <BottomBar>
        <IndexCell href="#index">
          <IndexValue>
            4083.67
            <Triangle w={17} h={14} points="8.500,1.500 15.500,12.500 1.500,12.500" color="#66666a" />
          </IndexValue>
          <IndexChange>
            上证 <b>+1.50%</b>
          </IndexChange>
        </IndexCell>
        <BottomAction>
          <ActionLabel>买</ActionLabel>
        </BottomAction>
        <BottomAction>
          <ActionLabel>卖</ActionLabel>
        </BottomAction>
        <BottomAction>
          <ActionLabel>撤</ActionLabel>
        </BottomAction>
        <BottomAction aria-label="添加">
          <PlusBoxIcon />
        </BottomAction>
        <BottomAction aria-label="更多">
          <MoreDotsIcon />
          <Dot $right={3} $top={26} />
        </BottomAction>
      </BottomBar>
    </Page>
  );
}
